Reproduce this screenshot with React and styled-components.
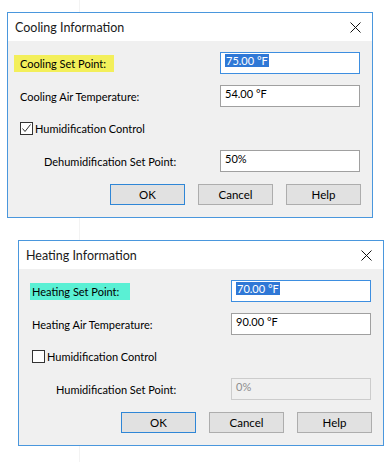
import React from 'react'
import styled, { createGlobalStyle } from 'styled-components'

const GlobalStyle = createGlobalStyle`
  html, body {
    margin: 0;
    padding: 0;
    background: linear-gradient(to right, #fff 79px, #f3f3f3 79px, #f3f3f3 80px, #fff 80px);
    font-family: Lato, "Noto Sans", sans-serif;
    color: #000;
  }
`

const Page = styled.div`
  display: flex;
  flex-direction: column;
  gap: 22px;
  padding-top: 12px;
  width: 384px;
  height: 462px;
  box-sizing: border-box;
`

const Window = styled.div`
  margin-left: ${p => p.$left}px;
  width: 366px;
  box-sizing: border-box;
  border: 1px solid #4a97dd;
  background: #f0f0f0;
  display: flex;
  flex-direction: column;
`

const TitleBar = styled.div`
  height: 28px;
  background: #fff;
  display: flex;
  align-items: center;
  justify-content: space-between;
  padding: 0 11px 0 7px;
  font-size: 12.5px;
  color: #1a1a1a;
`

const Close = styled.svg`
  width: 11px;
  height: 11px;
`

const Body = styled.div`
  display: flex;
  flex-direction: column;
  gap: 11px;
  padding: 11px 12px 12px ${p => p.$pad}px;
  font-size: 11px;
`

const Row = styled.div`
  display: flex;
  align-items: center;
  justify-content: space-between;
  height: 22px;
`

const Label = styled.span`
  padding-left: ${p => p.$indent || 0}px;
`

const Marked = styled.span`
  background: ${p => p.$color};
  padding: 2px ${p => p.$right}px 2px ${p => p.$left}px;
  margin-left: ${p => -p.$left}px;
  line-height: 13px;
`

const Field = styled.div`
  width: 140px;
  height: 22px;
  box-sizing: border-box;
  border: 1px solid ${p => (p.$focus ? '#3d8ee0' : p.$disabled ? '#cccccc' : '#a0a0a0')};
  background: ${p => (p.$disabled ? '#f0f0f0' : '#fff')};
  color: ${p => (p.$disabled ? '#8d8d8d' : '#000')};
  padding: 1px 0 0 4px;
  line-height: 13px;
`

const Selected = styled.span`
  background: #2f78d6;
  color: #fff;
  padding: 0 1px;
`

const CheckRow = styled.label`
  display: flex;
  align-items: center;
  height: 21px;
  gap: 2px;
`

const Box = styled.span`
  width: 13px;
  height: 13px;
  box-sizing: border-box;
  border: 1px solid #333;
  background: #fff;
  display: flex;
  align-items: center;
  justify-content: center;
`

const Buttons = styled.div`
  display: flex;
  justify-content: flex-end;
  gap: 13px;
  margin-top: 1px;
  margin-right: -1px;
`

const Button = styled.button`
  width: 75px;
  height: 21px;
  box-sizing: border-box;
  border: 1px solid ${p => (p.$default ? '#2f86d6' : '#adadad')};
  background: #e1e1e1;
  font-family: inherit;
  font-size: 11.5px;
  color: #000;
  padding: 0;
`

const dialogs = [
  {
    title: 'Cooling Information',
    left: 7,
    pad: 12,
    mark: { text: 'Cooling Set Point:', color: '#f3ef5a', left: 6, right: 8 },
    setPoint: '75.00 °F',
    airLabel: 'Cooling Air Temperature:',
    air: '54.00 °F',
    checked: true,
    humLabel: 'Dehumidification Set Point:',
    hum: '50%',
    disabled: false,
  },
  {
    title: 'Heating Information',
    left: 18,
    pad: 13,
    mark: { text: 'Heating Set Point:', color: '#5af0d4', left: 2, right: 11 },
    setPoint: '70.00 °F',
    airLabel: 'Heating Air Temperature:',
    air: '90.00 °F',
    checked: false,
    humLabel: 'Humidification Set Point:',
    hum: '0%',
    disabled: true,
  },
]

const Dialog = ({ d }) => (
  <Window $left={d.left}>
    <TitleBar>
      <span>{d.title}</span>
      <Close viewBox="0 0 11 11">
        <path d="M0.5 0.5 L10.5 10.5 M10.5 0.5 L0.5 10.5" stroke="#111" strokeWidth="1" fill="none" />
      </Close>
    </TitleBar>
    <Body $pad={d.pad}>
      <Row>
        <Marked $color={d.mark.color} $left={d.mark.left} $right={d.mark.right}>
          {d.mark.text}
        </Marked>
        <Field $focus>
          <Selected>{d.setPoint}</Selected>
        </Field>
      </Row>
      <Row>
        <Label>{d.airLabel}</Label>
        <Field>{d.air}</Field>
      </Row>
      <CheckRow>
        <Box>
          {d.checked && (
            <svg width="11" height="11" viewBox="0 0 11 11">
              <path d="M1.5 5.5 L4 8.5 L9.5 1.5" stroke="#333" strokeWidth="1" fill="none" />
            </svg>
          )}
        </Box>
        Humidification Control
      </CheckRow>
      <Row>
        <Label $indent={24}>{d.humLabel}</Label>
        <Field $disabled={d.disabled}>{d.hum}</Field>
      </Row>
      <Buttons>
        <Button $default>OK</Button>
        <Button>Cancel</Button>
        <Button>Help</Button>
      </Buttons>
    </Body>
  </Window>
)

export default function App() {
  return (
    <>
      <GlobalStyle />
      <Page>
        {dialogs.map(d => (
          <Dialog key={d.title} d={d} />
        ))}
      </Page>
    </>
  )
}
